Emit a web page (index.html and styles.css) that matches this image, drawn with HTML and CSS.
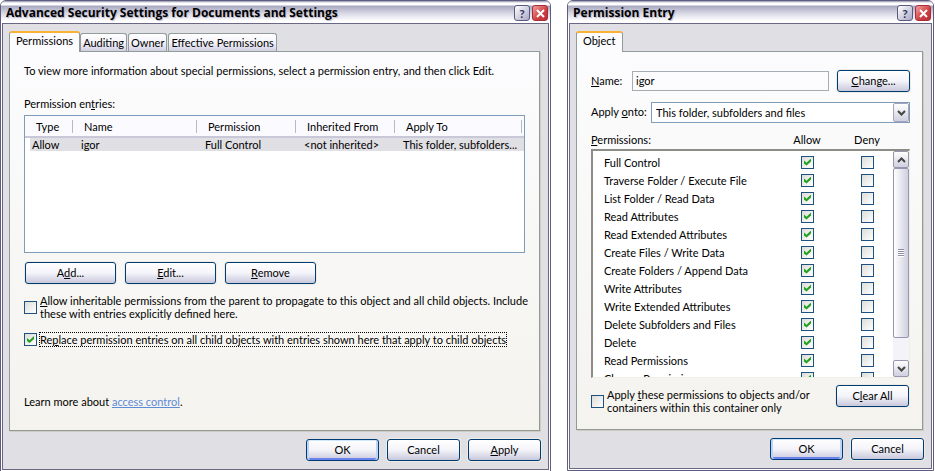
FILE: index.html
```html
<!DOCTYPE html>
<html lang="en">
<head>
    <meta charset="UTF-8">
    <meta name="viewport" content="width=device-width, initial-scale=1.0">
    <title>Advanced Security Settings</title>
    <link rel="stylesheet" href="styles.css">
</head>
<body>
    <div class="desktop">
        <div class="window window-security">
            <div class="title-bar">
                <h1 class="title">Advanced Security Settings for Documents and Settings</h1>
                <button class="title-button" aria-label="Help">?</button>
                <button class="title-button close" aria-label="Close">
                    <svg width="9" height="9" viewBox="0 0 9 9"><path d="M1 1L8 8M8 1L1 8" stroke="#fff" stroke-width="2"/></svg>
                </button>
            </div>
            <div class="window-body">
                <div class="tabs">
                    <button class="tab active">Permissions</button>
                    <button class="tab">Auditing</button>
                    <button class="tab">Owner</button>
                    <button class="tab">Effective Permissions</button>
                </div>
                <div class="panel">
                    <p class="intro">To view more information about special permissions, select a permission entry, and then click Edit.</p>
                    <p class="list-label">Permission en<u>t</u>ries:</p>
                    <div class="entries">
                        <table class="entries-table">
                            <colgroup>
                                <col class="col-type">
                                <col class="col-name">
                                <col class="col-permission">
                                <col class="col-inherited">
                                <col>
                            </colgroup>
                            <thead>
                                <tr><th>Type</th><th>Name</th><th>Permission</th><th>Inherited From</th><th>Apply To</th></tr>
                            </thead>
                            <tbody>
                                <tr><td>Allow</td><td>igor</td><td>Full Control</td><td>&lt;not inherited&gt;</td><td>This folder, subfolders...</td></tr>
                            </tbody>
                        </table>
                    </div>
                    <div class="actions">
                        <button class="button wide">A<u>d</u>d...</button>
                        <button class="button wide"><u>E</u>dit...</button>
                        <button class="button wide"><u>R</u>emove</button>
                    </div>
                    <div class="option">
                        <input type="checkbox" id="inherit">
                        <label for="inherit"><u>A</u>llow inheritable permissions from the parent to propagate to this object and all child objects. Include<br>these with entries explicitly defined here.</label>
                    </div>
                    <div class="option">
                        <input type="checkbox" id="replace" checked>
                        <label for="replace" class="focused">Re<u>p</u>lace permission entries on all child objects with entries shown here that apply to child objects</label>
                    </div>
                    <p class="learn">Learn more about <a href="#">access control</a>.</p>
                </div>
                <div class="footer">
                    <button class="button default">OK</button>
                    <button class="button">Cancel</button>
                    <button class="button"><u>A</u>pply</button>
                </div>
            </div>
        </div>

        <div class="window window-entry">
            <div class="title-bar">
                <h1 class="title">Permission Entry</h1>
                <button class="title-button" aria-label="Help">?</button>
                <button class="title-button close" aria-label="Close">
                    <svg width="9" height="9" viewBox="0 0 9 9"><path d="M1 1L8 8M8 1L1 8" stroke="#fff" stroke-width="2"/></svg>
                </button>
            </div>
            <div class="window-body">
                <div class="tabs">
                    <button class="tab active">Object</button>
                </div>
                <div class="panel">
                    <div class="field">
                        <label for="name" class="name-label"><u>N</u>ame:</label>
                        <input type="text" id="name" class="text-box" value="igor" readonly>
                        <button class="button"><u>C</u>hange...</button>
                    </div>
                    <div class="field">
                        <label for="onto" class="onto-label">Apply <u>o</u>nto:</label>
                        <div class="select-box">
                            <select id="onto">
                                <option>This folder, subfolders and files</option>
                            </select>
                            <span class="select-arrow">
                                <svg width="9" height="6" viewBox="0 0 9 6"><path d="M1 1L4.5 4.5L8 1" fill="none" stroke="#444" stroke-width="2"/></svg>
                            </span>
                        </div>
                    </div>
                    <div class="rights-head">
                        <span class="rights-title"><u>P</u>ermissions:</span>
                        <span class="rights-col">Allow</span>
                        <span class="rights-col">Deny</span>
                    </div>
                    <div class="rights">
                        <div class="rights-view">
                            <table class="rights-table">
                                <tr><td>Full Control</td><td><input type="checkbox" aria-label="Allow Full Control" checked></td><td><input type="checkbox" aria-label="Deny Full Control"></td></tr>
                                <tr><td>Traverse Folder / Execute File</td><td><input type="checkbox" aria-label="Allow Traverse Folder" checked></td><td><input type="checkbox" aria-label="Deny Traverse Folder"></td></tr>
                                <tr><td>List Folder / Read Data</td><td><input type="checkbox" aria-label="Allow List Folder" checked></td><td><input type="checkbox" aria-label="Deny List Folder"></td></tr>
                                <tr><td>Read Attributes</td><td><input type="checkbox" aria-label="Allow Read Attributes" checked></td><td><input type="checkbox" aria-label="Deny Read Attributes"></td></tr>
                                <tr><td>Read Extended Attributes</td><td><input type="checkbox" aria-label="Allow Read Extended Attributes" checked></td><td><input type="checkbox" aria-label="Deny Read Extended Attributes"></td></tr>
                                <tr><td>Create Files / Write Data</td><td><input type="checkbox" aria-label="Allow Create Files" checked></td><td><input type="checkbox" aria-label="Deny Create Files"></td></tr>
                                <tr><td>Create Folders / Append Data</td><td><input type="checkbox" aria-label="Allow Create Folders" checked></td><td><input type="checkbox" aria-label="Deny Create Folders"></td></tr>
                                <tr><td>Write Attributes</td><td><input type="checkbox" aria-label="Allow Write Attributes" checked></td><td><input type="checkbox" aria-label="Deny Write Attributes"></td></tr>
                                <tr><td>Write Extended Attributes</td><td><input type="checkbox" aria-label="Allow Write Extended Attributes" checked></td><td><input type="checkbox" aria-label="Deny Write Extended Attributes"></td></tr>
                                <tr><td>Delete Subfolders and Files</td><td><input type="checkbox" aria-label="Allow Delete Subfolders and Files" checked></td><td><input type="checkbox" aria-label="Deny Delete Subfolders and Files"></td></tr>
                                <tr><td>Delete</td><td><input type="checkbox" aria-label="Allow Delete" checked></td><td><input type="checkbox" aria-label="Deny Delete"></td></tr>
                                <tr><td>Read Permissions</td><td><input type="checkbox" aria-label="Allow Read Permissions" checked></td><td><input type="checkbox" aria-label="Deny Read Permissions"></td></tr>
                                <tr><td>Change Permissions</td><td><input type="checkbox" aria-label="Allow Change Permissions" checked></td><td><input type="checkbox" aria-label="Deny Change Permissions"></td></tr>
                            </table>
                        </div>
                        <div class="scrollbar">
                            <button class="scroll-button" aria-label="Scroll up">
                                <svg width="9" height="6" viewBox="0 0 9 6"><path d="M1 5L4.5 1.5L8 5" fill="none" stroke="#444" stroke-width="2"/></svg>
                            </button>
                            <div class="scroll-thumb"><span class="grip"></span></div>
                            <div class="scroll-track"></div>
                            <button class="scroll-button" aria-label="Scroll down">
                                <svg width="9" height="6" viewBox="0 0 9 6"><path d="M1 1L4.5 4.5L8 1" fill="none" stroke="#444" stroke-width="2"/></svg>
                            </button>
                        </div>
                    </div>
                    <div class="bottom-row">
                        <div class="option">
                            <input type="checkbox" id="container-only">
                            <label for="container-only">Apply <u>t</u>hese permissions to objects and/or<br>containers within this container only</label>
                        </div>
                        <button class="button">C<u>l</u>ear All</button>
                    </div>
                </div>
                <div class="footer">
                    <button class="button default">OK</button>
                    <button class="button">Cancel</button>
                </div>
            </div>
        </div>
    </div>
</body>
</html>
```

FILE: styles.css
```css
* {
    box-sizing: border-box;
}
body {
    margin: 0;
    background-color: #fff;
    color: #000;
    font-family: Lato, "Liberation Sans", Arial, sans-serif;
    font-size: 11px;
    line-height: 13px;
}
p, h1 {
    margin: 0;
}
button, input, select {
    font: inherit;
    color: inherit;
    margin: 0;
    padding: 0;
}
u {
    text-underline-offset: 1px;
}
.desktop {
    display: flex;
    align-items: flex-start;
    gap: 16px;
    padding-right: 1px;
}

/* window frame */
.window {
    min-width: 0;
    border: 1px solid #5f5d7d;
    border-radius: 6px 6px 0 0;
    background-color: #fff;
    padding: 0 1px 1px;
}
.window-security {
    flex: 547 1 0;
}
.window-entry {
    flex: 363 1 0;
}
.title-bar {
    display: flex;
    align-items: center;
    gap: 2px;
    height: 22px;
    padding: 2px 2px 0 5px;
    margin: 0 -1px;
    border-radius: 5px 5px 0 0;
    background: linear-gradient(#8f8fad 0, #fff 2px, #fff 4px, #a9a8c2 5px, #dcdce8 13px, #fff 20px, #fff 22px);
}
.title {
    flex: 1;
    font-family: "Open Sans", "Noto Sans", sans-serif;
    font-size: 12px;
    font-weight: bold;
    line-height: 18px;
    text-shadow: 1px 1px 1px #b4b3c6;
    white-space: nowrap;
}
.title-button {
    display: flex;
    align-items: center;
    justify-content: center;
    width: 16px;
    height: 16px;
    border: 1px solid #5a5a80;
    border-radius: 3px;
    background: linear-gradient(135deg, #fff, #a9a8c4);
    color: #33335c;
    font-weight: bold;
    font-size: 12px;
}
.title-button.close {
    border-color: #a82c38;
    background: linear-gradient(135deg, #f0a0a0, #cf3d40 60%, #b83038);
}
.window-body {
    border: 1px solid #6a6886;
    background-color: #e0dfe3;
    padding: 7px 8px 8px 6px;
}

/* tabs */
.tabs {
    display: flex;
    align-items: flex-end;
    gap: 1px;
    height: 20px;
}
.tab {
    height: 18px;
    padding: 0 2px 1px;
    border: 1px solid #919b9c;
    border-bottom: none;
    border-radius: 3px 3px 0 0;
    background: linear-gradient(#fff, #f4f4fa 50%, #cfcfe2);
    white-space: nowrap;
}
.tab.active {
    position: relative;
    z-index: 1;
    height: 21px;
    margin-bottom: -1px;
    margin-right: -1px;
    padding: 0 6px 4px;
    border-top: 2px solid #f9b233;
    background: #fcfcfe;
}

/* tab page */
.panel {
    border: 1px solid #919b9c;
    box-shadow: 1px 1px 0 #cfccbd;
    background: linear-gradient(#fcfcfe, #f4f3ee);
    padding: 12px 14px 22px 14px;
}
.intro {
    margin-bottom: 20px;
}
.list-label {
    margin-bottom: 5px;
}
.entries {
    height: 138px;
    border: 1px solid #7f9db9;
    background-color: #fff;
}
.entries-table {
    width: 100%;
    table-layout: fixed;
    border-collapse: collapse;
}
.entries-table th {
    position: relative;
    height: 21px;
    padding: 0 0 0 11px;
    background-color: #fafaff;
    border-bottom: 2px solid #c9c8d8;
    font-weight: normal;
    text-align: left;
}
.entries-table th::after {
    content: "";
    position: absolute;
    right: 0;
    top: 4px;
    width: 1px;
    height: 13px;
    background-color: #b9b8ca;
}
.entries-table th:last-child::after {
    right: 2px;
}
.entries-table td {
    height: 14px;
    padding: 0 0 0 8px;
    background-color: #e0dfe3;
    white-space: nowrap;
}
.entries-table td:first-child {
    padding-left: 7px;
    background: linear-gradient(90deg, #fff 5px, #e0dfe3 5px);
}
.col-type {
    width: 48px;
}
.col-name {
    width: 124px;
}
.col-permission, .col-inherited {
    width: 99px;
}

/* buttons */
.button {
    flex: none;
    width: 73px;
    height: 22px;
    padding-bottom: 1px;
    border: 1px solid #003c74;
    border-radius: 3px;
    background: linear-gradient(#fff, #f4f4fa 50%, #c8c8dc);
    box-shadow: 0 0 0 1px #ecebe6;
}
.button.wide {
    width: 91px;
}
.button.default {
    box-shadow: inset 0 1px #cee7ff, inset 2px 0 #bcd4f6, inset -2px 0 #bcd4f6, inset 0 -2px #6982ee;
}
.actions {
    display: flex;
    gap: 9px;
    margin: 9px 0 9px;
    padding-left: 1px;
}
.footer {
    display: flex;
    justify-content: flex-end;
    gap: 8px;
    margin: 8px -1px 0 0;
}

/* check boxes */
input[type="checkbox"] {
    appearance: none;
    flex: none;
    display: block;
    width: 13px;
    height: 13px;
    border: 1px solid #1c5180;
    background: linear-gradient(135deg, #dcdcd7, #fff);
}
input[type="checkbox"]:checked::before {
    content: "";
    display: block;
    width: 7px;
    height: 7px;
    margin: 2px;
    background-color: #21a121;
    clip-path: polygon(0 28%, 36% 62%, 100% 0, 100% 42%, 36% 100%, 0 70%);
}
.option {
    display: flex;
    align-items: center;
    gap: 2px;
    margin-bottom: 11px;
}
.option label {
    border: 1px solid transparent;
    white-space: nowrap;
}
.option label.focused {
    border: 1px dotted #000;
}
.learn {
    margin-top: 48px;
}
.learn a {
    color: #5f8bd6;
}

/* permission entry form */
.window-entry .panel {
    padding: 18px 12px 14px 14px;
}
.field {
    display: flex;
    align-items: center;
    margin-bottom: 10px;
}
.field label {
    padding-bottom: 2px;
}
.name-label {
    width: 41px;
}
.text-box {
    flex: 1;
    min-width: 0;
    height: 20px;
    margin-right: 8px;
    padding: 0 3px 1px;
    border: 1px solid #a5acb2;
    background: transparent;
}
.onto-label {
    width: 60px;
}
.select-box {
    position: relative;
    flex: 1;
}
.select-box select {
    appearance: none;
    display: block;
    width: 100%;
    height: 21px;
    padding: 0 20px 1px 4px;
    border: 1px solid #7f9db9;
    border-radius: 0;
    background-color: #fff;
}
.select-arrow {
    position: absolute;
    top: 1px;
    right: 1px;
    display: flex;
    align-items: center;
    justify-content: center;
    width: 16px;
    height: 19px;
    border: 1px solid #a5a4bd;
    border-radius: 2px;
    background: linear-gradient(#fff, #cfcfdf);
    pointer-events: none;
}
.rights-head {
    display: flex;
    margin-bottom: 3px;
    padding-right: 13px;
}
.rights-title {
    flex: 1;
}
.rights-col {
    width: 60px;
    text-align: center;
}
.rights {
    display: flex;
    height: 229px;
    border: 2px solid #8d8c86;
    border-right: 1px solid #f1efe2;
    border-bottom: 1px solid #f1efe2;
    background-color: #fff;
}
.rights-view {
    flex: 1;
    overflow: hidden;
    padding-top: 2px;
}
.rights-table {
    width: 100%;
    table-layout: fixed;
    border-collapse: collapse;
}
.rights-table td {
    height: 18px;
    width: 60px;
    padding: 0 0 0 28px;
}
.rights-table td:first-child {
    width: auto;
    padding-left: 11px;
}
.scrollbar {
    display: flex;
    flex-direction: column;
    width: 16px;
    background-color: #f3f3f9;
}
.scroll-button {
    display: flex;
    align-items: center;
    justify-content: center;
    height: 17px;
    border: 1px solid #9796b0;
    border-radius: 2px;
    background: linear-gradient(#fff, #cfcfdf);
}
.scroll-thumb {
    display: flex;
    align-items: center;
    justify-content: center;
    height: 170px;
    border: 1px solid #9796b0;
    border-radius: 2px;
    background: linear-gradient(90deg, #fff, #cfcfdf);
}
.grip {
    width: 6px;
    height: 8px;
    background: repeating-linear-gradient(#8f8eaa 0, #8f8eaa 1px, #fff 1px, #fff 2px);
}
.scroll-track {
    flex: 1;
}
.bottom-row {
    display: flex;
    justify-content: space-between;
    align-items: flex-start;
    padding: 7px 1px 0 0;
}
.bottom-row .option {
    margin: 2px 0 0;
}
```
